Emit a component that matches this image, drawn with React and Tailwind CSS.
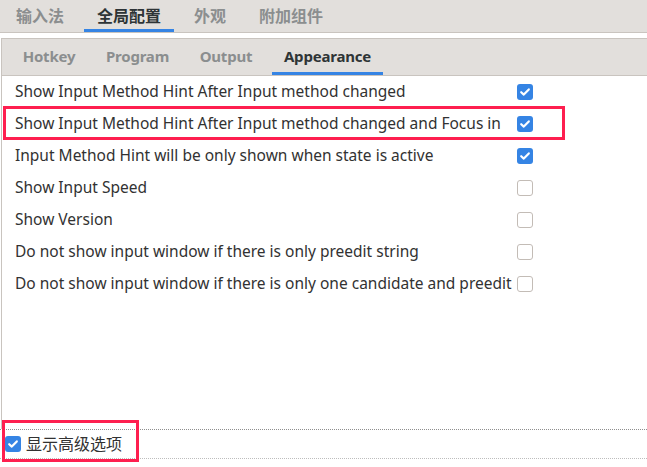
import React from "react";

const font = '"Noto Sans", "Noto Sans CJK SC", sans-serif';

const rows = [
  { label: "Show Input Method Hint After Input method changed", checked: true },
  { label: "Show Input Method Hint After Input method changed and Focus in", checked: true },
  { label: "Input Method Hint will be only shown when state is active", checked: true },
  { label: "Show Input Speed", checked: false },
  { label: "Show Version", checked: false },
  { label: "Do not show input window if there is only preedit string", checked: false },
  { label: "Do not show input window if there is only one candidate and preedit", checked: false },
];

function Check({ checked }) {
  if (!checked) {
    return <span className="block w-[16px] h-[16px] rounded-[3px] border border-[#c3bcb6] bg-white" />;
  }
  return (
    <span className="flex items-center justify-center w-[16px] h-[16px] rounded-[3px] bg-[#3584e4]">
      <svg width="12" height="12" viewBox="0 0 12 12">
        <path d="M2.2 6.2 L4.8 8.6 L9.8 3.4" fill="none" stroke="white" strokeWidth="2.2" strokeLinecap="round" strokeLinejoin="round" />
      </svg>
    </span>
  );
}

function Tab({ label, active, className }) {
  return (
    <div
      className={
        "h-full flex items-center justify-center border-b-[3px] whitespace-nowrap " +
        (active ? "border-[#3584e4] text-[#2e3436]" : "border-transparent text-[#8b8e8f]") +
        " " + className
      }
    >
      {label}
    </div>
  );
}

export default function App() {
  return (
    <div className="relative w-[647px] h-[467px] bg-white overflow-hidden text-[#323232]" style={{ fontFamily: font }}>
      {/* top tabs */}
      <div className="h-[33px] bg-[#e2dfdc] border-b border-[#c9c4bf] flex items-end pl-[3px] gap-[7px] text-[16px] font-semibold">
        <Tab label="输入法" className="px-[13px] pt-[2px]" />
        <Tab label="全局配置" active className="px-[13px] pt-[2px]" />
        <Tab label="外观" className="px-[13px] pt-[2px]" />
        <Tab label="附加组件" className="px-[13px] pt-[2px]" />
      </div>

      <div className="h-[5px]" />

      {/* inner panel */}
      <div className="relative ml-[1px] h-[391px] border-l border-t border-[#c9c4bf]">
        <div className="h-[37px] bg-[#e2dfdc] border-b border-[#c9c4bf] flex items-end pl-[9px] text-[15px] font-bold tracking-[-0.2px]">
          <Tab label="Hotkey" className="w-[76px] pt-[1px]" />
          <Tab label="Program" className="w-[85px] ml-[8px] pt-[1px]" />
          <Tab label="Output" className="w-[74px] ml-[9px] pt-[1px]" />
          <Tab label="Appearance" active className="w-[111px] ml-[9px] pt-[1px]" />
        </div>

        <div className="grid grid-cols-[auto_auto] justify-start gap-x-[5px] pl-[13px] text-[15.5px]">
          {rows.map((r) => (
            <React.Fragment key={r.label}>
              <div className="h-[32px] flex items-center whitespace-nowrap">{r.label}</div>
              <div className="h-[32px] flex items-center">
                <Check checked={r.checked} />
              </div>
            </React.Fragment>
          ))}
        </div>

        {/* highlight */}
        <div className="absolute left-[1px] top-[67px] w-[562px] h-[34px] border-[3px] border-[#fe1f4f]" />
      </div>

      {/* bottom */}
      <div className="relative border-t border-dotted border-[#8e8e8e]">
        <div className="h-[28px] flex items-center gap-[5px] pl-[5px] text-[16px]">
          <Check checked />
          <span>显示高级选项</span>
        </div>
        <div className="border-t border-dotted border-[#bdbdbd]" />
        <div className="absolute left-[2px] top-[-10px] w-[137px] h-[42px] border-[3px] border-[#fe1f4f]" />
      </div>
    </div>
  );
}
